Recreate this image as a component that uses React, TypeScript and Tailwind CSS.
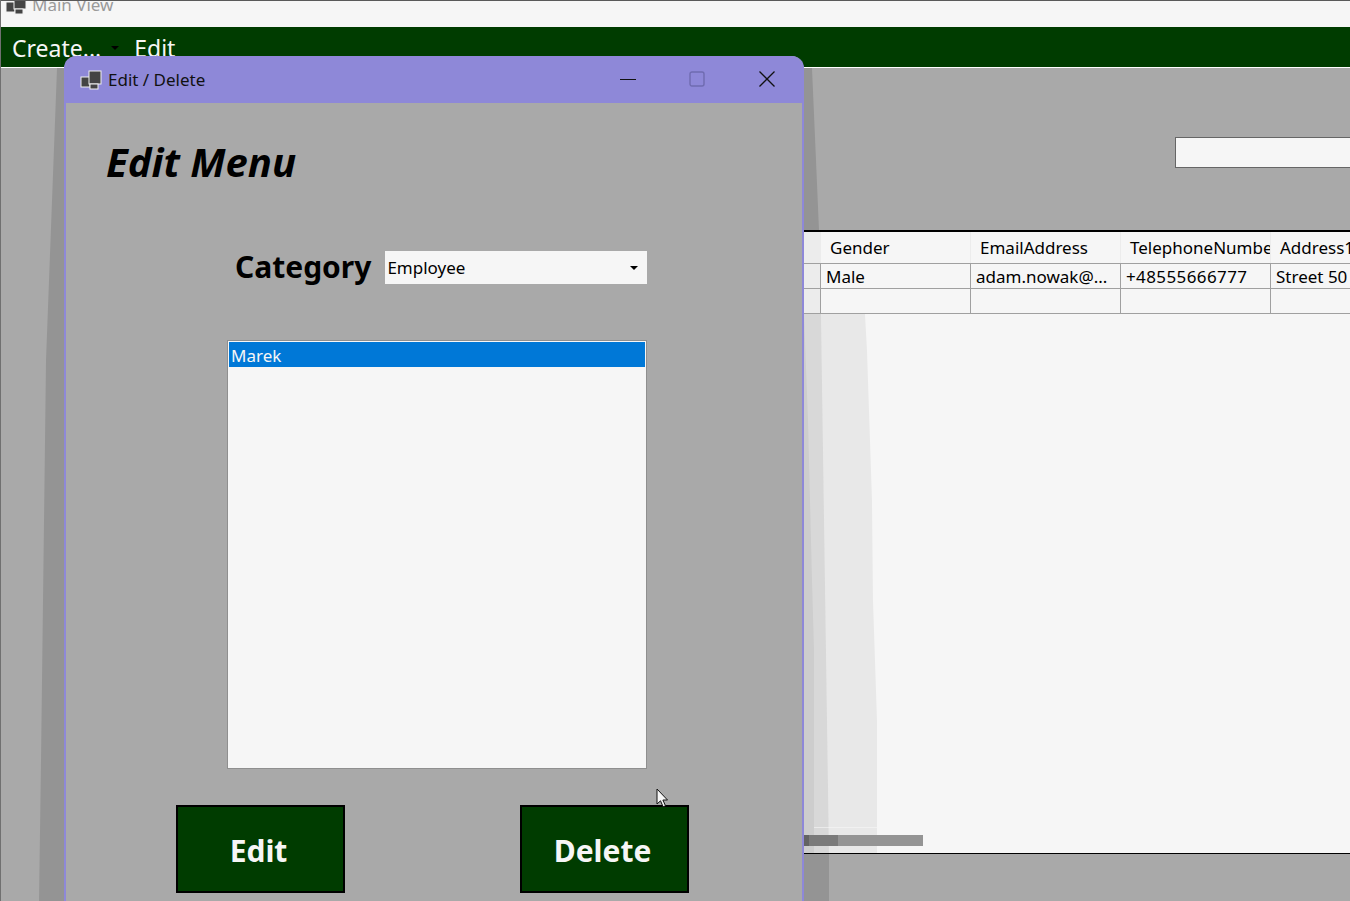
const FONT = "font-['Noto_Sans',_'Open_Sans',_sans-serif]"

function WindowIcon({ dark }: { dark: string }) {
  return (
    <svg width="22" height="20" viewBox="0 0 22 20" className="block">
      <rect x="1" y="7" width="9" height="10" fill={dark} stroke="#f0f0f0" strokeWidth="1" />
      <rect x="9" y="1" width="12" height="13" fill={dark} stroke="#f0f0f0" strokeWidth="1" />
      <rect x="10" y="14" width="8" height="5" fill={dark} stroke="#f0f0f0" strokeWidth="1" />
    </svg>
  )
}

function GridRow({ cells, header }: { cells: string[]; header?: boolean }) {
  const widths = ["w-[150px]", "w-[150px]", "w-[150px]", "w-[80px]"]
  return (
    <div className={`flex border-b border-[#a0a0a0] ${header ? "h-[32px]" : "h-[25px]"}`}>
      <div className={`w-[17px] shrink-0 border-r ${header ? "border-[#ececec]" : "border-[#a0a0a0]"} bg-[#ececec]`} />
      {cells.map((c, i) => (
        <div
          key={i}
          className={`${widths[i]} shrink-0 overflow-hidden whitespace-nowrap border-r text-[17px] leading-[24px] ${
            header ? "border-[#ececec] pl-[9px] pt-[4px]" : "border-[#a0a0a0] pl-[5px] pt-px"
          } ${c.startsWith("+") ? "tracking-[0.4px]" : ""}`}
        >
          {c}
        </div>
      ))}
    </div>
  )
}

function MainWindow() {
  return (
    <div className="flex h-[901px] w-[1350px] flex-col border-l border-[#707070] bg-[#a9a9a9]">
      <div className="h-[27px] shrink-0 overflow-hidden border-t border-[#5a5a5a] bg-[#f6f6f6]">
        <div className="-mt-[9px] flex items-center pl-[4px] text-[17px] text-[#9a9a9a]">
          <WindowIcon dark="#444" />
          <span className="ml-[5px]">Main View</span>
        </div>
      </div>
      <div className="flex h-[41px] shrink-0 items-center border-b border-white bg-[#003c00] pl-[11px] pt-[2px] text-[23px] text-[#f6f6f6]">
        <span>Create...</span>
        <span className="ml-[10px] mr-[15px] h-0 w-0 border-x-[4px] border-t-[4px] border-x-transparent border-t-black" />
        <span>Edit</span>
      </div>
      <div className="flex h-[162px] shrink-0 justify-end pt-[69px]">
        <div className="h-[31px] w-[175px] shrink-0 border border-r-0 border-[#666] bg-[#f6f6f6]" />
      </div>
      <div className="ml-[200px] h-[624px] shrink-0 overflow-hidden border-t-2 border-b border-y-black bg-[#f6f6f6] pl-[603px] text-black">
        <GridRow header cells={["Gender", "EmailAddress", "TelephoneNumbe", "Address1"]} />
        <GridRow cells={["Male", "adam.nowak@...", "+48555666777", "Street 50"]} />
        <GridRow cells={["", "", "", ""]} />
      </div>
    </div>
  )
}

function Shadows() {
  return (
    <svg width="1350" height="901" className="absolute left-0 top-0">
      {/* dialog shadow on the grey main window */}
      <polygon points="57,68 300,68 300,901 39,901 41,760 46,360" fill="#000" fillOpacity="0.12" />
      <polygon points="804,68 812,68 816,160 819,230 804,230" fill="#000" fillOpacity="0.12" />
      <rect x="804" y="854" width="25" height="47" fill="#000" fillOpacity="0.12" />
      {/* same shadow falling on the white grid area */}
      <polygon points="821,314 865,314 867,350 872,500 873,600 877,720 877,853 829,853" fill="#000" fillOpacity="0.055" />
      <polygon points="804,314 821,314 829,853 804,853" fill="#000" fillOpacity="0.12" />
      <polygon points="804,314 808,420 812,580 814,650 814,853 804,853" fill="#000" fillOpacity="0.05" />
      <rect x="814" y="827" width="63" height="1" fill="#f6f6f6" fillOpacity="0.6" />
      {/* horizontal scrollbar */}
      <rect x="804" y="835" width="119" height="11" fill="#949494" />
      <rect x="804" y="835" width="34" height="11" fill="#7a7a7a" />
      <rect x="804" y="835" width="5" height="11" fill="#636363" />
    </svg>
  )
}

function Dialog() {
  return (
    <div className="absolute left-[64px] top-[56px] flex h-[845px] w-[740px] flex-col overflow-hidden rounded-t-[12px] border-x-2 border-[#8e88d8] bg-[#a9a9a9]">
      <div className="-mx-[1px] flex h-[47px] shrink-0 items-center bg-[#8e88d8] pl-[15px] text-[17px] text-[#111]">
        <WindowIcon dark="#444" />
        <span className="ml-[6px]">Edit / Delete</span>
        <div className="ml-auto -mt-[2px] flex items-center">
          <svg width="16" height="16" viewBox="0 0 16 16" className="mr-[53px]">
            <path d="M0 8.5h16" stroke="#111" strokeWidth="1" />
          </svg>
          <svg width="16" height="16" viewBox="0 0 16 16" className="mr-[54px]">
            <rect x="1" y="1" width="14" height="14" rx="2" fill="none" stroke="#6f6bb0" strokeWidth="1.4" />
          </svg>
          <svg width="16" height="16" viewBox="0 0 16 16" className="mr-[28px]">
            <path d="M0.5 0.5l15 15M15.5 0.5l-15 15" stroke="#111" strokeWidth="1.3" />
          </svg>
        </div>
      </div>

      <div className="flex-1 text-black">
        <h1 className="ml-[40px] mt-[32px] text-[40px] font-bold italic leading-[54px]">Edit Menu</h1>
        <div className="ml-[169px] mt-[61px] flex h-[34px] items-center">
          <span className="-mt-[2px] text-[30px] font-bold">Category</span>
          <div className="ml-[14px] flex h-[33px] w-[262px] items-center justify-between bg-[#f6f6f6] pl-[2px] pr-[9px] pt-px text-[17px]">
            <span>Employee</span>
            <span className="h-0 w-0 border-x-[4px] border-t-[4px] border-x-transparent border-t-black" />
          </div>
        </div>
        <div className="ml-[161px] mt-[56px] h-[429px] w-[420px] border border-[#8f8f8f] bg-[#f6f6f6] p-px">
          <div className="h-[25px] bg-[#0078d7] pl-[2px] pt-px text-[17px] leading-[25px] text-[#f6f6f6]">Marek</div>
        </div>
        <div className="ml-[110px] mt-[36px] flex gap-[175px]">
          <button className="h-[88px] w-[169px] border-2 border-black bg-[#003c00] pr-[4px] pt-[2px] text-[30px] font-bold text-[#f6f6f6]">
            Edit
          </button>
          <button className="h-[88px] w-[169px] border-2 border-black bg-[#003c00] pr-[4px] pt-[2px] text-[30px] font-bold text-[#f6f6f6]">
            Delete
          </button>
        </div>
      </div>
    </div>
  )
}

export default function App() {
  return (
    <div className={`relative h-[901px] w-[1350px] overflow-hidden ${FONT}`}>
      <MainWindow />
      <Shadows />
      <Dialog />
      <svg width="14" height="21" viewBox="0 0 14 21" className="absolute left-[656px] top-[788px]">
        <path d="M1 1v15l3.5-3.2 2.6 6 2.4-1-2.6-5.8h4.6z" fill="#f6f6f6" stroke="#111" strokeWidth="1" />
      </svg>
    </div>
  )
}
